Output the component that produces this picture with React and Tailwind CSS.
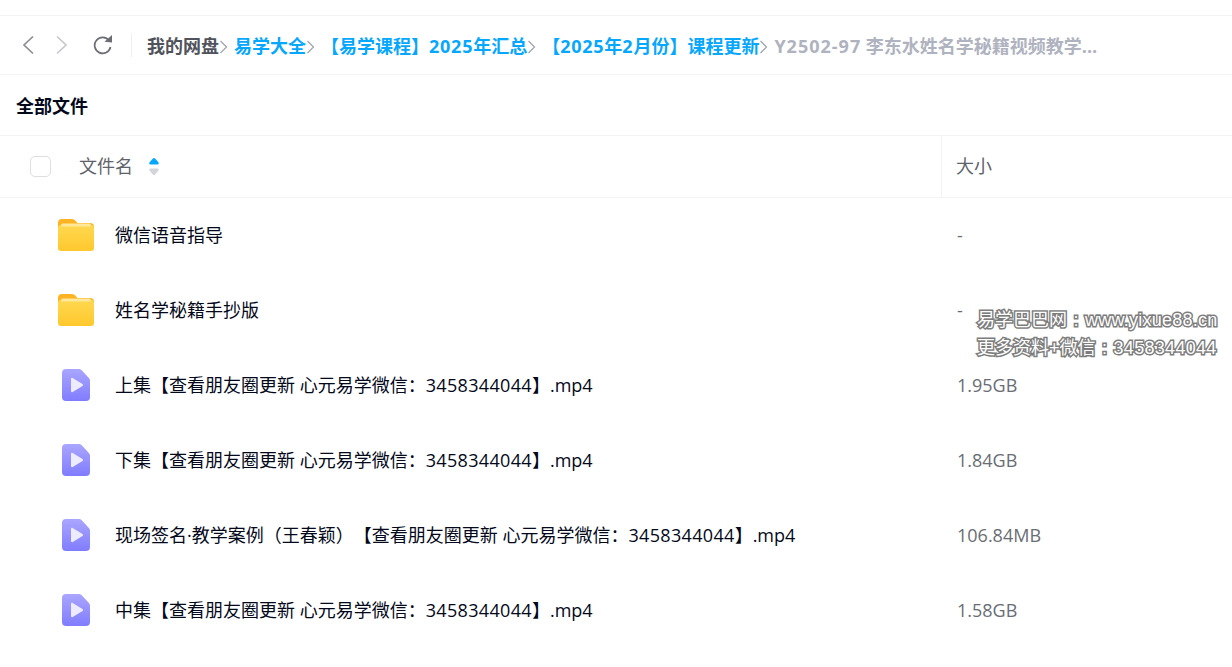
import React from "react";

const font = "font-['Open_Sans','Noto_Sans_CJK_SC',sans-serif] [text-spacing-trim:space-all]";

const crumbs = [
  "易学大全",
  <>【易学课程】<span className="tracking-[0.75px]">2025</span>年汇总</>,
  <>【<span className="tracking-[0.75px]">2025</span>年<span className="tracking-[0.75px]">2</span>月份】课程更新</>,
];

const files = [
  { name: "微信语音指导", size: "-", type: "folder" },
  { name: "姓名学秘籍手抄版", size: "-", type: "folder" },
  { name: "上集【查看朋友圈更新 心元易学微信：3458344044】.mp4", size: "1.95GB", type: "video" },
  { name: "下集【查看朋友圈更新 心元易学微信：3458344044】.mp4", size: "1.84GB", type: "video" },
  { name: "现场签名·教学案例（王春颖）【查看朋友圈更新 心元易学微信：3458344044】.mp4", size: "106.84MB", type: "video" },
  { name: "中集【查看朋友圈更新 心元易学微信：3458344044】.mp4", size: "1.58GB", type: "video" },
];

const FolderIcon = () => (
  <svg width="36" height="32" viewBox="0 0 36 32">
    <defs>
      <linearGradient id="fold" x1="0" y1="0" x2="0" y2="1">
        <stop offset="0" stopColor="#ffd84f" />
        <stop offset="1" stopColor="#ffc82e" />
      </linearGradient>
    </defs>
    <path d="M0 4a4 4 0 0 1 4-4h9.500c2 0 3 .8 4.200 2l1.800 2H32a4 4 0 0 1 4 4v6H0z" fill="#fdb322" />
    <rect x="0" y="6" width="36" height="26" rx="3" fill="url(#fold)" />
    <rect x="3" y="4.500" width="30" height="3" rx="1.500" fill="#ffe89a" />
  </svg>
);

const VideoIcon = () => (
  <svg width="28" height="32" viewBox="0 0 28 32">
    <defs>
      <linearGradient id="vid" x1="0" y1="0" x2="0" y2="1">
        <stop offset="0" stopColor="#aaa6ff" />
        <stop offset="1" stopColor="#807cff" />
      </linearGradient>
    </defs>
    <path d="M4 0h13c1 0 1.800.4 2.500 1.100l7.400 7.800c.7.700 1.100 1.500 1.100 2.500V28a4 4 0 0 1-4 4H4a4 4 0 0 1-4-4V4a4 4 0 0 1 4-4z" fill="url(#vid)" />
    <path d="M9 10v12c0 1 .9 1.500 1.700 1l9.800-6c.7-.5.700-1.500 0-2l-9.800-6C9.900 8.500 9 9 9 10z" fill="#ecebff" />
  </svg>
);

const Sep = () => (
  <svg width="15" height="16" viewBox="0 0 15 16" className="shrink-0">
    <path d="M1.500 2l6 6-6 6" fill="none" stroke="#a3a6ae" strokeWidth="1.300" />
  </svg>
);

// digits in the names run a little wider than the body font's
const FileName = ({ name }) =>
  name.split(/(\d{10})/).map((part, i) =>
    /^\d{10}$/.test(part) ? (
      <span key={i} className="tracking-[0.33px]">{part}</span>
    ) : (
      <span key={i}>{part}</span>
    )
  );

export default function App() {
  return (
    <div className={`relative w-[1232px] h-[667px] overflow-hidden bg-white ${font}`}>
      <div className="h-[15px]" />
      {/* breadcrumb bar */}
      <div className="h-[60px] border-y border-[#f2f3f5] flex items-center">
        <div className="flex items-center w-[132px] shrink-0 pl-[22px]">
          <svg width="12" height="20" viewBox="0 0 12 20">
            <path d="M11 1.500L2 10l9 8.500" fill="none" stroke="#8b8e95" strokeWidth="1.700" />
          </svg>
          <svg width="12" height="20" viewBox="0 0 12 20" className="ml-[22px]">
            <path d="M1 1.500l9 8.500-9 8.500" fill="none" stroke="#c6c8cc" strokeWidth="1.700" />
          </svg>
          <svg width="20" height="20" viewBox="0 0 20 20" className="ml-[25px]">
            <path d="M15.800 5.200A8 8 0 1 0 17.500 12" fill="none" stroke="#6a6d74" strokeWidth="1.700" />
            <path d="M11.500 6.800L19 7.500V0z" fill="#6a6d74" />
          </svg>
        </div>
        <div className="h-[24px] w-px bg-[#eeeff1] -ml-[1px]" />
        <div className="flex items-center pl-[15px] pt-[3px] text-[18px] font-bold whitespace-nowrap">
          <span className="text-[#50535c]">我的网盘</span>
          <Sep />
          {crumbs.map((c, i) => (
            <React.Fragment key={i}>
              <span className="text-[#06a7ff]">{c}</span>
              <Sep />
            </React.Fragment>
          ))}
          <span className="text-[#afb3bf]">
            <span className="tracking-[1px]">Y2502-97</span> 李东水姓名学秘籍视频教学...
          </span>
        </div>
      </div>
      {/* title */}
      <div className="h-[61px] flex items-center pl-[16px] pt-[2px] text-[18px] font-bold text-[#03081a] border-b border-[#f2f3f5]">
        全部文件
      </div>
      {/* table header */}
      <div className="h-[62px] flex items-center border-b border-[#f2f3f5] text-[18px] text-[#5f626b]">
        <div className="w-[942px] flex items-center h-full border-r border-[#f2f3f5] shrink-0">
          <div className="ml-[30px] w-[21px] h-[21px] rounded-[5px] border border-[#dcdee2] bg-white" />
          <span className="ml-[28px]">文件名</span>
          <svg width="10" height="17" viewBox="0 0 10 17" className="ml-[16px]">
            <path d="M5 0c.5 0 .8.2 1.100.6l3.300 3.600c.6.800.6 2.300-1 2.300H1.600c-1.600 0-1.600-1.500-1-2.300L3.900.6C4.200.2 4.500 0 5 0z" fill="#06a7ff" />
            <path d="M5 17c-.5 0-.8-.2-1.100-.6L.6 12.800c-.6-.8-.6-2.300 1-2.300h6.800c1.600 0 1.600 1.500 1 2.300l-3.300 3.600c-.3.400-.6.600-1.100.6z" fill="#d3d5db" />
          </svg>
        </div>
        <span className="pl-[14px]">大小</span>
      </div>
      {/* rows */}
      <div className="flex flex-col">
        {files.map((f) => (
          <div key={f.name} className="h-[75px] flex items-center text-[18px] text-[#03081a]">
            <div className="w-[115px] shrink-0 -mt-[2px]">
              {f.type === "folder" ? (
                <div className="ml-[58px]"><FolderIcon /></div>
              ) : (
                <div className="ml-[62px]"><VideoIcon /></div>
              )}
            </div>
            <span className="w-[842px] shrink-0 whitespace-nowrap"><FileName name={f.name} /></span>
            <span className="text-[#6a6d74]">{f.size}</span>
          </div>
        ))}
      </div>
      {/* watermark */}
      <div className="absolute left-[977px] top-[306px] text-[18px] leading-[28px] text-white whitespace-nowrap [-webkit-text-stroke:3px_#7d7d7d] [paint-order:stroke_fill] font-['Liberation_Sans','Noto_Sans_CJK_SC',sans-serif]">
        <div className="flex">
          <span>易学巴巴网</span>
          <span className="w-[18px] text-center">:</span>
          <span className="tracking-[0.25px]">www.yixue88.cn</span>
        </div>
        <div className="flex">
          <span>更多资料+微信</span>
          <span className="w-[18px] text-center">:</span>
          <span className="tracking-[0.3px]">3458344044</span>
        </div>
      </div>
    </div>
  );
}
